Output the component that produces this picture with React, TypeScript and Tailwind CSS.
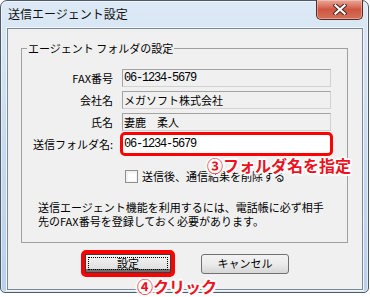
import React from "react";

const outline =
  "[text-shadow:-2px_0_#fff,2px_0_#fff,0_-2px_#fff,0_2px_#fff,-1.5px_-1.5px_#fff,1.5px_-1.5px_#fff,-1.5px_1.5px_#fff,1.5px_1.5px_#fff,0_0_3px_#fff]";

function ReadField({ value, mono }: { value: string; mono?: boolean }) {
  return (
    <div className="h-[18px] flex items-center bg-[#f0f0f0] border border-[#a3a3a3] border-r-[#d2d2d2] border-b-[#d2d2d2] px-[1px] whitespace-nowrap overflow-hidden">
      {mono ? (
        <span className="font-['Liberation_Mono',monospace] text-[12px] tracking-[-1.2px] text-black">
          {value}
        </span>
      ) : (
        <span className="text-[11px] text-black">{value}</span>
      )}
    </div>
  );
}

function CloseIcon() {
  return (
    <svg width="14" height="11" viewBox="0 0 14 11">
      <path d="M2.5 1.5 L11.5 9.5 M11.5 1.5 L2.5 9.5" stroke="#4a2620" strokeWidth="4.2" strokeLinecap="square" />
      <path d="M2.5 1.5 L11.5 9.5 M11.5 1.5 L2.5 9.5" stroke="#ffffff" strokeWidth="2.2" strokeLinecap="square" />
    </svg>
  );
}

export default function App() {
  return (
    <div className="w-[370px] h-[297px] bg-white font-['Noto_Sans_CJK_JP','Noto_Sans',sans-serif]">
      <div className="relative w-[369px] h-[293px] flex flex-col border border-[#4d5b69] rounded-t-[7px] rounded-b-[5px] bg-gradient-to-b from-[#dde9f6] via-[#c6dbf0] to-[#b9d0ea] pl-[6px] pr-[5px] pb-[2px] shadow-[inset_0_0_0_1px_rgba(255,255,255,0.55)]">
        {/* title bar */}
        <div className="h-[27px] flex justify-between">
          <div className="pl-[1px] pt-[5px] text-[12px] leading-[16px] text-[#111]">送信エージェント設定</div>
          <div className="-mt-[1px] w-[47px] h-[20px] flex items-center justify-center rounded-b-[5px] border border-t-0 border-[#5a2a22] bg-gradient-to-b from-[#e9a89a] via-[#cf5640] to-[#d2705a] shadow-[inset_0_0_0_1px_rgba(255,220,210,0.45)]">
            <CloseIcon />
          </div>
        </div>

        {/* client area */}
        <div className="flex-1 bg-[#f0f0f0] border border-[#7d8995] shadow-[0_0_0_1px_#eef5fc]">
          <fieldset className="ml-[13px] mt-[12px] w-[327px] border border-[#a0a0a0] pt-[14px] pb-[14px]">
            <legend className="ml-[5px] px-[1px] text-[11px] leading-[14px] text-black">
              エージェント フォルダの設定
            </legend>

            <div className="grid grid-cols-[91px_209px] gap-x-[9px] gap-y-[4px] items-center text-[11px] text-black">
              <div className="text-right leading-[18px]">FAX番号</div>
              <ReadField value="06-1234-5679" mono />
              <div className="text-right leading-[18px]">会社名</div>
              <ReadField value="メガソフト株式会社" />
              <div className="text-right leading-[18px]">氏名</div>
              <ReadField value="妻鹿　柔人" />
              <div className="text-right leading-[18px]">送信フォルダ名:</div>
              <div className="h-[24px] -my-[3px] -mx-[2px] flex items-center border-[3px] border-[#ff0000] rounded-[5px] bg-white px-[1px]">
                <span className="font-['Liberation_Mono',monospace] text-[12px] tracking-[-1.2px] text-black">
                  06-1234-5679
                </span>
              </div>
            </div>

            <div className="ml-[103px] mt-[17px] flex items-center gap-[4px] text-[11px] leading-[13px] text-black">
              <div className="w-[13px] h-[13px] border border-[#8e8f8f] bg-white shadow-[inset_0_0_0_1px_#f2f2f2,inset_1px_1px_2px_#cfcfcf]" />
              <span>送信後、通信結果を削除する</span>
            </div>

            <p className="ml-[16px] mt-[17px] text-[11px] leading-[14px] text-black whitespace-nowrap">
              送信エージェント機能を利用するには、電話帳に必ず相手
              <br />
              先のFAX番号を登録しておく必要があります。
            </p>
          </fieldset>

          <div className="ml-[73px] mt-[7px] flex items-center gap-[26px]">
            <div className="border-[4px] border-[#ff0000] rounded-[5px]">
              <button className="block w-[86px] h-[19px] p-[2px] border border-[#3c3c3c] bg-gradient-to-b from-[#f4f4f4] to-[#dcdcdc] shadow-[inset_0_-3px_0_#6f6f6f]">
                <div className="h-full flex items-center justify-center border border-dotted border-black text-[11px] leading-none text-black">
                  設定
                </div>
              </button>
            </div>
            <button className="block w-[88px] h-[20px] flex items-center justify-center rounded-[3px] border border-[#707070] bg-gradient-to-b from-[#f3f3f3] via-[#ebebeb] to-[#d6d6d6] text-[11px] text-black">
              キャンセル
            </button>
          </div>
        </div>

        <div className={`absolute left-[206px] top-[155px] text-[16px] leading-[18px] font-bold text-[#ee1122] whitespace-nowrap ${outline}`}>
          ③フォルダ名を指定
        </div>
        <div className={`absolute left-[136px] top-[276px] text-[16px] leading-[18px] font-bold text-[#ee1122] whitespace-nowrap ${outline}`}>
          ④クリック
        </div>
      </div>
    </div>
  );
}
